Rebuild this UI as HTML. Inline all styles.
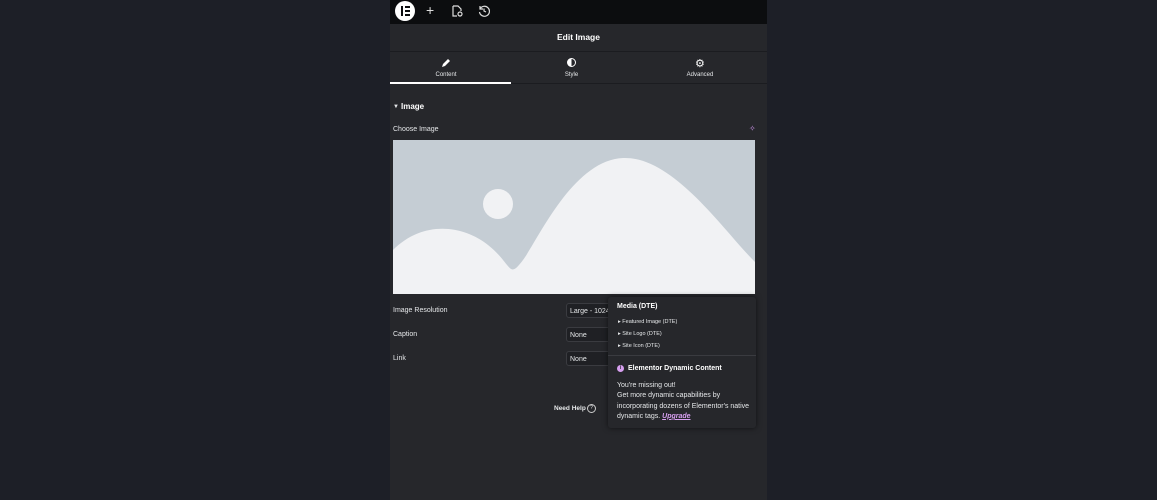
<!DOCTYPE html>
<html><head><style>
body{margin:0;width:1157px;height:500px;background:#1d1f27;font-family:"Liberation Sans",sans-serif;position:relative;overflow:hidden;color:#e6e8ea}
.a{position:absolute}
.panel{left:390px;top:0;width:377px;height:500px;background:#26272b}
.top{left:390px;top:0;width:377px;height:24px;background:#0c0d0f}
.t{font-size:7px;white-space:nowrap}
.sel{background:#1f2024;border:1px solid #3a3b40;border-radius:3px;height:15px;font-size:7px;line-height:15px;padding-left:3px;box-sizing:border-box}
</style></head><body>
<div class="a panel"></div>
<div class="a top"></div>
<div class="a" style="left:395px;top:1px;width:20px;height:20px;border-radius:50%;background:#fff"></div>
<div class="a" style="left:401px;top:6px;width:2px;height:10px;background:#0c0d0f"></div>
<div class="a" style="left:405px;top:6px;width:5px;height:2px;background:#0c0d0f"></div>
<div class="a" style="left:405px;top:10px;width:5px;height:2px;background:#0c0d0f"></div>
<div class="a" style="left:405px;top:14px;width:5px;height:2px;background:#0c0d0f"></div>
<div class="a" style="left:426px;top:2px;font-size:14px;color:#ddd">+</div>
<svg class="a" style="left:452px;top:5px" width="11" height="12" viewBox="0 0 11 12" fill="none" stroke="#ddd" stroke-width="1.2"><path d="M1 1h5l3 3v2M1 1v10h4"/><circle cx="8" cy="9" r="2"/></svg>
<svg class="a" style="left:478px;top:5px" width="12" height="12" viewBox="0 0 12 12" fill="none" stroke="#ddd" stroke-width="1.2"><path d="M2 4A5 5 0 1 1 1.5 7M2 1v3h3M6 3.5V6l2 1"/></svg>
<div class="a" style="left:390px;top:24px;width:377px;height:27px;border-bottom:1px solid #1b1c20"></div>
<div class="a" style="left:390px;top:32px;width:377px;text-align:center;font-size:8.5px;font-weight:bold;color:#fff">Edit Image</div>
<div class="a" style="left:390px;top:83px;width:377px;height:1px;background:#1b1c20"></div>
<div class="a" style="left:390px;top:82px;width:121px;height:2px;background:#fff"></div>
<svg class="a" style="left:441px;top:58px" width="10" height="10" viewBox="0 0 10 10"><path d="M1 9l1-3 5-5 2 2-5 5z" fill="#fff"/></svg>
<div class="a t" style="left:390px;top:72px;width:112px;text-align:center;font-size:6px">Content</div>
<div class="a" style="left:567px;top:58px;width:9px;height:9px;border-radius:50%;border:1.2px solid #fff;box-sizing:border-box;background:linear-gradient(90deg,#fff 50%,transparent 50%)"></div>
<div class="a t" style="left:511px;top:72px;width:121px;text-align:center;font-size:6px">Style</div>
<div class="a" style="left:695px;top:57px;font-size:11px;color:#fff">⚙</div>
<div class="a t" style="left:640px;top:72px;width:120px;text-align:center;font-size:6px">Advanced</div>
<div class="a" style="left:393px;top:104px;font-size:6px">▼</div>
<div class="a" style="left:401px;top:102px;font-size:8px;font-weight:bold;color:#fff">Image</div>
<div class="a t" style="left:393px;top:126px">Choose Image</div>
<div class="a" style="left:749px;top:124px;font-size:8px;color:#c48ee0">✧</div>
<svg class="a" style="left:393px;top:140px" width="362" height="154" viewBox="0 0 362 154"><rect width="362" height="154" fill="#c5cdd4"/><path d="M0 110C30 80 70 85 95 105S115 140 130 120S180 20 230 18S330 90 362 122V154H0z" fill="#f1f2f4"/><circle cx="105" cy="64" r="15" fill="#f1f2f4"/></svg>
<div class="a t" style="left:393px;top:307px">Image Resolution</div>
<div class="a t" style="left:393px;top:331px">Caption</div>
<div class="a t" style="left:393px;top:355px">Link</div>
<div class="a sel" style="left:566px;top:303px;width:60px">Large - 1024</div>
<div class="a sel" style="left:566px;top:327px;width:60px">None</div>
<div class="a sel" style="left:566px;top:351px;width:60px">None</div>
<div class="a t" style="left:554px;top:405px;font-size:6.5px;font-weight:bold">Need Help</div>
<div class="a" style="left:587px;top:404px;width:7px;height:7px;border:1px solid #ccc;border-radius:50%;font-size:5px;text-align:center;line-height:7px">?</div>
<div class="a" style="left:608px;top:297px;width:148px;height:131px;background:#26272b;border-radius:3px;box-shadow:0 0 6px rgba(0,0,0,.6)"></div>
<div class="a t" style="left:617px;top:303px;font-weight:bold;color:#fff">Media (DTE)</div>
<div class="a t" style="left:618px;top:319px;font-size:5.5px">▸ Featured Image (DTE)</div>
<div class="a t" style="left:618px;top:331px;font-size:5.5px">▸ Site Logo (DTE)</div>
<div class="a t" style="left:618px;top:343px;font-size:5.5px">▸ Site Icon (DTE)</div>
<div class="a" style="left:608px;top:355px;width:148px;height:1px;background:#3a3b40"></div>
<div class="a" style="left:617px;top:365px;width:7px;height:7px;border-radius:50%;background:#d79ff0;color:#26272b;font-size:5px;text-align:center;line-height:7px;font-weight:bold">i</div>
<div class="a t" style="left:628px;top:365px;font-weight:bold;color:#fff">Elementor Dynamic Content</div>
<div class="a" style="left:617px;top:381px;font-size:7px;line-height:10.3px;width:135px">You're missing out!<br>Get more dynamic capabilities by incorporating dozens of Elementor's native dynamic tags. <b style="color:#d79ff0;text-decoration:underline;font-style:italic">Upgrade</b></div>
</body></html>
